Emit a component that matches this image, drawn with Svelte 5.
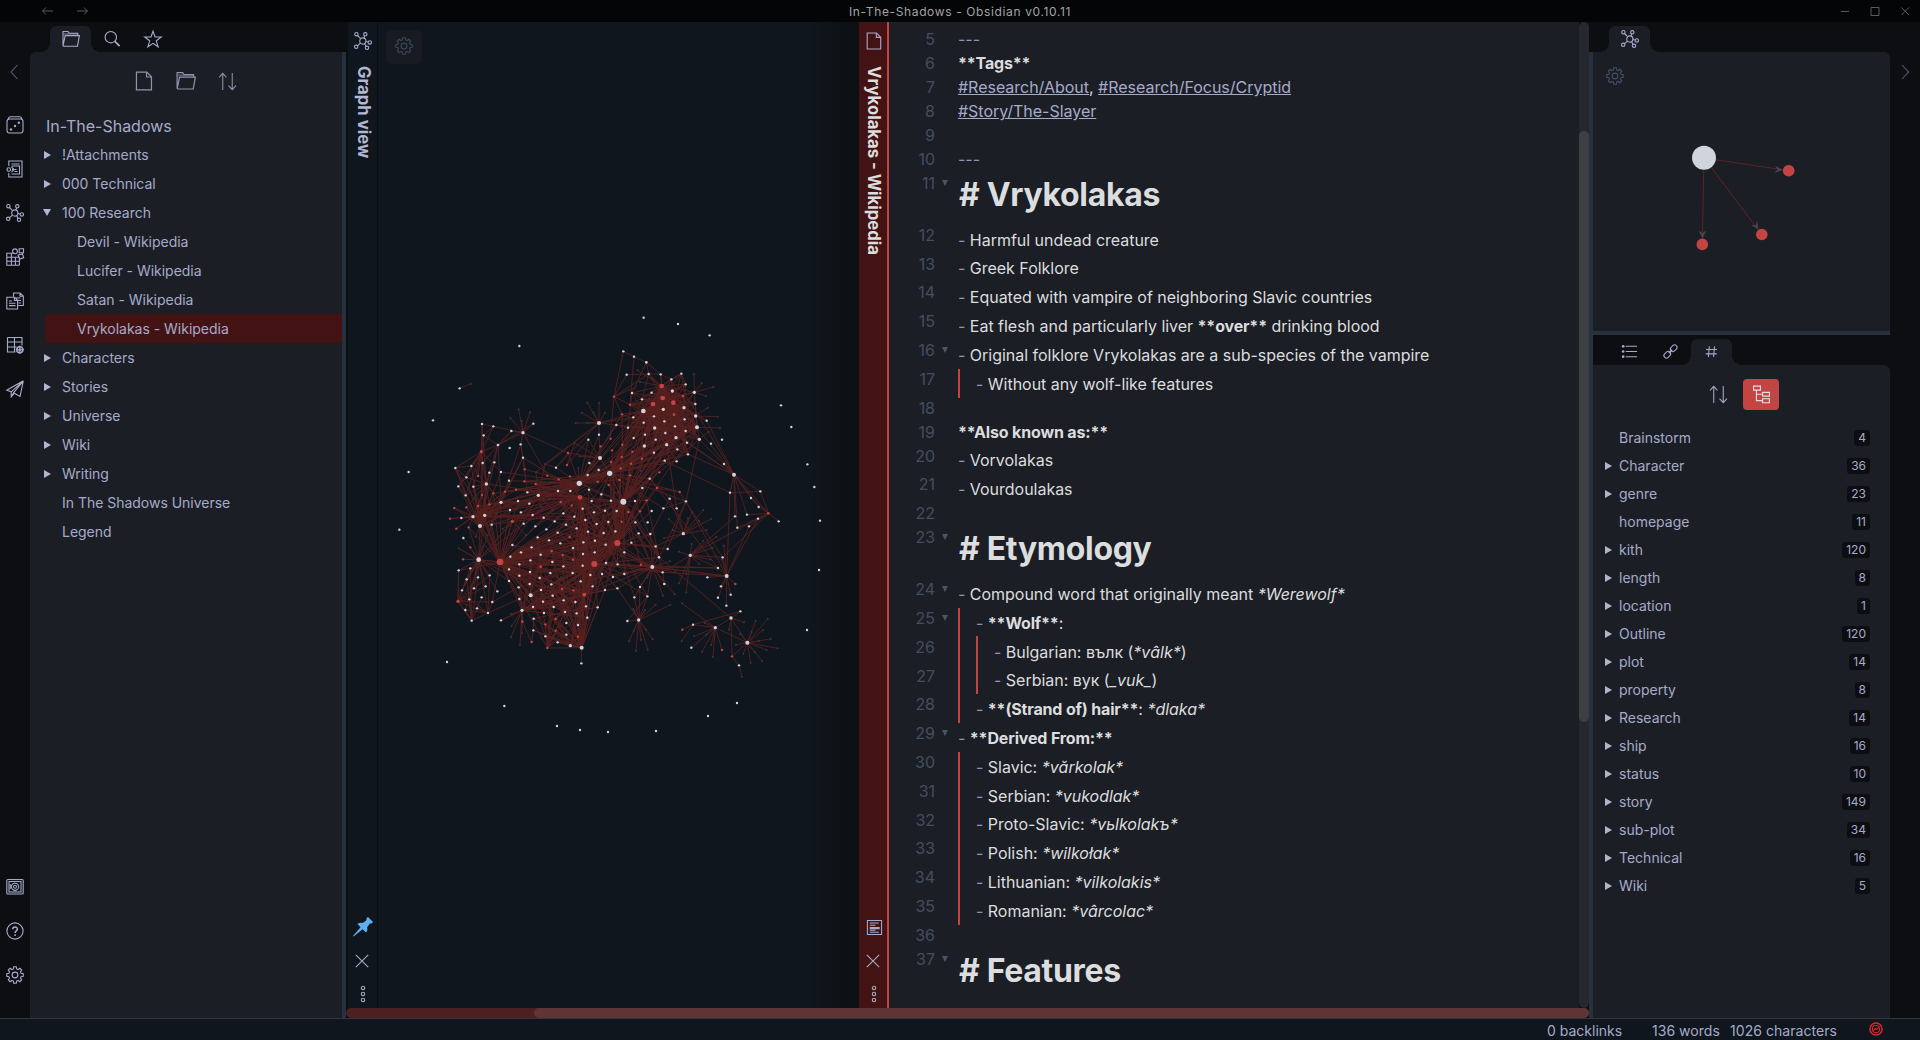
<script>
  // ---------- file explorer ----------
  const files = [
    { name: '!Attachments', kind: 'closed' },
    { name: '000 Technical', kind: 'closed' },
    { name: '100 Research', kind: 'open' },
    { name: 'Devil - Wikipedia', kind: 'child' },
    { name: 'Lucifer - Wikipedia', kind: 'child' },
    { name: 'Satan - Wikipedia', kind: 'child' },
    { name: 'Vrykolakas - Wikipedia', kind: 'child', active: true },
    { name: 'Characters', kind: 'closed' },
    { name: 'Stories', kind: 'closed' },
    { name: 'Universe', kind: 'closed' },
    { name: 'Wiki', kind: 'closed' },
    { name: 'Writing', kind: 'closed' },
    { name: 'In The Shadows Universe', kind: 'file' },
    { name: 'Legend', kind: 'file' }
  ];

  const tags = [
    ['Brainstorm', 4, 0], ['Character', 36, 1], ['genre', 23, 1], ['homepage', 11, 0],
    ['kith', 120, 1], ['length', 8, 1], ['location', 1, 1], ['Outline', 120, 1],
    ['plot', 14, 1], ['property', 8, 1], ['Research', 14, 1], ['ship', 16, 1],
    ['status', 10, 1], ['story', 149, 1], ['sub-plot', 34, 1], ['Technical', 16, 1], ['Wiki', 5, 1]
  ];

  // ---------- editor: t = plain, b = bold, i = italic, m = list/rule mark, a = tag ----------
  const lines = [
    { n: 5, s: [['m', '---']] },
    { n: 6, s: [['b', '**Tags**']] },
    { n: 7, s: [['a', '#Research/About'], ['t', ', '], ['a', '#Research/Focus/Cryptid']] },
    { n: 8, s: [['a', '#Story/The-Slayer']] },
    { n: 9, s: [] },
    { n: 10, s: [['m', '---']] },
    { n: 11, k: 'head', fold: 1, s: [['b', '# Vrykolakas']] },
    { n: 12, k: 'list', s: [['t', 'Harmful undead creature']] },
    { n: 13, k: 'list', s: [['t', 'Greek Folklore']] },
    { n: 14, k: 'list', s: [['t', 'Equated with vampire of neighboring Slavic countries']] },
    { n: 15, k: 'list', s: [['t', 'Eat flesh and particularly liver '], ['b', '**over**'], ['t', ' drinking blood']] },
    { n: 16, k: 'list', fold: 1, s: [['t', 'Original folklore Vrykolakas are a sub-species of the vampire']] },
    { n: 17, k: 'list', d: 1, s: [['t', 'Without any wolf-like features']] },
    { n: 18, s: [] },
    { n: 19, s: [['b', '**Also known as:**']] },
    { n: 20, k: 'list', s: [['t', 'Vorvolakas']] },
    { n: 21, k: 'list', s: [['t', 'Vourdoulakas']] },
    { n: 22, s: [] },
    { n: 23, k: 'head', fold: 1, s: [['b', '# Etymology']] },
    { n: 24, k: 'list', fold: 1, s: [['t', 'Compound word that originally meant '], ['i', '*Werewolf*']] },
    { n: 25, k: 'list', d: 1, fold: 1, s: [['b', '**Wolf**'], ['t', ':']] },
    { n: 26, k: 'list', d: 2, s: [['t', 'Bulgarian: вълк ('], ['i', '*vâlk*'], ['t', ')']] },
    { n: 27, k: 'list', d: 2, s: [['t', 'Serbian: вук ('], ['i', '_vuk_'], ['t', ')']] },
    { n: 28, k: 'list', d: 1, s: [['b', '**(Strand of) hair**'], ['t', ': '], ['i', '*dlaka*']] },
    { n: 29, k: 'list', fold: 1, s: [['b', '**Derived From:**']] },
    { n: 30, k: 'list', d: 1, s: [['t', 'Slavic: '], ['i', '*vărkolak*']] },
    { n: 31, k: 'list', d: 1, s: [['t', 'Serbian: '], ['i', '*vukodlak*']] },
    { n: 32, k: 'list', d: 1, s: [['t', 'Proto-Slavic: '], ['i', '*vьlkolakъ*']] },
    { n: 33, k: 'list', d: 1, s: [['t', 'Polish: '], ['i', '*wilkołak*']] },
    { n: 34, k: 'list', d: 1, s: [['t', 'Lithuanian: '], ['i', '*vilkolakis*']] },
    { n: 35, k: 'list', d: 1, s: [['t', 'Romanian: '], ['i', '*vârcolac*']] },
    { n: 36, s: [] },
    { n: 37, k: 'head', fold: 1, s: [['b', '# Features']] }
  ];

  // ---------- graph view: "x,y" or "x,y,r", in thirds of a pixel ----------
  const parse = (str, dx, c) =>
    str.trim().split(/\s+/).map((p) => {
      const [x, y, r] = p.split(',').map(Number);
      return { x: x + dx, y, c, r: r || (c === 'g' ? 3 : 3.6) };
    });

  const white = [
    ...parse(`276,372 310,379 281,406 324,435,4 359,444 364,393 430,371 392,433 399,473 399,398,5 278,489 313,487 298,518 333,516 196,504 244,498
      229,532 205,559 250,560 227,586 289,552,5 357,542 412,577 445,586,5 384,603 418,611 333,607,5 360,630 393,637 428,645
      461,653 284,646,5 249,650,5 270,678,6 305,674 214,654 220,714 206,811 241,805 264,832 230,838 216,871 252,865 287,859
      299,826 322,874 238,898 275,892 307,906 261,925 226,930 245,962 294,939 266,779,7 401,671 436,679 469,688 503,698
      528,674 494,664 520,640 553,650 578,626 586,660 560,685 594,695 620,672 612,637 645,632 655,666 641,699 676,694
      680,633 663,602 605,603 634,583 597,569 541,573 504,573 498,503 593,525 598,489 626,510 630,474,6 627,404 595,419
      679,375 714,383 367,735 425,742 443,712 477,721 511,730 393,757 361,770 421,781 388,793 357,808 452,764 487,786
      520,799 481,819 449,834 420,816 388,827 357,843 386,862 419,852 453,870 484,853 488,887 422,886,6 388,897 429,921
      459,905 396,931,5 431,956 462,939 491,921 521,901 556,906 525,936 529,969 560,940 588,919 592,953 564,975
      529,1004 503,1027 541,1037,5 575,1043,6 574,1090 466,1009 430,991 333,961 548,819 572,844 608,859 601,825 636,822
      648,789 669,831 683,793 703,822 703,757 647,734 615,722 580,727 549,744 579,762 614,757 578,797 645,870 682,865
      623,922 712,963 700,154 710,224 627,369,6 568,550,8 659,520,8 700,605,9`, 0, 'w'),
    ...parse(`102,170 139,187,4 146,222 182,223 244,221 214,238 257,253 217,273,5 283,277,5 155,278 96,279 126,298 286,312
      252,323,5 190,328,5 130,333,7 162,349 100,352 287,348,5 254,358 193,364 131,368 320,362 291,382,6 225,379 164,384,5
      257,393 196,399 135,404 228,413,5 298,418,5 366,419 167,419 101,414 333,431 261,428 200,434,5 133,438,5 162,458
      232,448 264,463 194,482 230,484 372,492 402,524,6 390,578 481,574 453,594 476,621 441,644 405,649 474,656 536,664
      412,683 447,679 149,536 127,564 105,603 209,596 258,604 190,625 230,625 155,633 106,667 143,667 116,700 151,702,4
      250,701,5 167,739 203,747 94,728 177,772,4 157,801,6 188,817 120,861 103,892 142,889 193,852,4 271,766,5 368,772
      354,804 322,832 380,828,6 363,859 392,884 354,893 379,917 116,960,5 421,934 393,954,5 279,974 346,983,5
      442,1028,6 274,1043 417,1096`, 630, 'w')
  ];
  const red = [
    ...parse(`274,455,5 264,528 276,585 310,580 345,575 378,569 264,618 298,613 229,622 193,624 180,656 199,686 236,682
      241,742 219,778 404,508 403,544 437,552 472,527 506,538 540,529 534,459 531,495 512,606 545,616 367,664,5 539,711
      485,753 518,765 549,779 452,800,4 516,867 550,871 397,965,4 466,973 497,957 497,992 564,1010 472,1044 425,1026
      662,416 632,439 666,451 697,434 695,471 663,486 692,505 623,545 656,555 688,540 695,665 696,343 672,290 715,636
      204,904,5 570,592,7 583,884,6 330,786,10 613,792,9 682,729,9`, 0, 'r'),
    ...parse(`185,258,7 188,294,7 159,312,7 220,308,7 249,288,4 222,344,4 90,314 97,455 93,491 126,476 90,526 178,517 171,564
      239,576 140,601 120,634 505,640,4 406,852 123,794 247,989 366,1050 396,1069`, 630, 'r')
  ];
  const grey = [
    ...parse(`386,328 420,337 361,354 395,363 592,308 627,308 575,338 610,338 645,338 557,369 592,369 554,429 568,469
      565,504 465,492 438,517 479,596 453,621 487,630 320,641 338,687 408,706 257,710 291,706 206,745 278,739 513,832
      363,942 365,978 363,1012 390,1035 396,1000 684,577`, 0, 'g'),
    ...parse(`282,223 305,250 340,261 318,288 323,323 353,350 360,384 113,211 120,246 326,395 310,630 334,656 298,663 320,690
      349,711 276,636 264,655 206,657 218,690 192,714 310,722 372,737 337,744 275,732 237,755 331,779 365,778 298,792
      210,784 258,822 224,817 237,850 259,877 224,883 246,910 211,915 189,887 167,914 142,833 135,930 100,927 101,993
      138,989 87,1024 123,1020 158,1017 108,1052 143,1049 314,969 387,989 282,1009 318,1004 334,1035 306,1056 339,1071
      432,967 467,962 503,957 455,996 489,990 420,1001 477,1023 512,1017 533,1045 500,1050 464,1056 430,1061 486,1083
      452,1088 408,1034 122,512`, 630, 'g')
  ];
  const lone = [
    ...parse('388,138 129,361 56,516 28,689 171,1086 209,265 343,1218 501,1278 570,1290 654,1296 798,1293 954,1248 1041,1209', 0, 'w'),
    ...parse('131,53 234,72 329,106 543,316 574,381 622,493 643,561 660,662 657,810 621,990', 630, 'w'),
    ...parse('242,252 875,1024 1056,1130', 0, 'g')
  ];

  let seed = 7;
  const rnd = () => ((seed = (seed * 16807) % 2147483647) / 2147483647);
  const linked = [...white, ...red];
  const edges = [];
  const link = (x1, y1, x2, y2) => edges.push(`M${x1} ${y1}L${x2} ${y2}`);
  const fan = (hx, hy, x0, y0, x1, y1, p) => {
    for (const n of linked)
      if (n.x >= x0 && n.x <= x1 && n.y >= y0 && n.y <= y1 && rnd() < p * 1.7) link(hx, hy, n.x, n.y);
  };
  const path = (str) => {
    const pts = str.split(' ').map((p) => p.split(','));
    for (let i = 1; i < pts.length; i++) link(pts[i - 1][0], pts[i - 1][1], pts[i][0], pts[i][1]);
  };

  // unresolved notes hang off the closest hub
  const hubs = linked.filter((n) => n.r >= 5);
  for (const g of grey) {
    let best = hubs[0];
    for (const h of hubs) if (Math.hypot(h.x - g.x, h.y - g.y) < Math.hypot(best.x - g.x, best.y - g.y)) best = h;
    link(g.x, g.y, best.x, best.y);
  }
  // central mass
  fan(330, 786, 345, 690, 600, 940, 0.5);
  fan(330, 786, 225, 560, 480, 700, 0.4);
  fan(330, 786, 480, 560, 720, 740, 0.35);
  fan(613, 792, 345, 690, 720, 960, 0.42);
  fan(613, 792, 480, 560, 700, 760, 0.35);
  fan(682, 729, 460, 560, 860, 900, 0.35);
  fan(583, 884, 400, 740, 690, 1045, 0.35);
  fan(575, 1043, 430, 850, 640, 1045, 0.5);
  fan(541, 1037, 430, 900, 600, 1045, 0.35);
  fan(472, 1044, 450, 850, 600, 1000, 0.25);
  fan(422, 886, 345, 740, 560, 960, 0.25);
  fan(396, 931, 330, 780, 620, 965, 0.25);
  fan(452, 800, 345, 690, 620, 920, 0.25);
  fan(525, 936, 400, 740, 640, 1045, 0.2);
  fan(575, 1043, 480, 650, 640, 850, 0.25);
  fan(266, 779, 190, 600, 420, 900, 0.25);
  fan(266, 779, 200, 790, 330, 960, 0.3);
  fan(204, 904, 200, 800, 330, 965, 0.5);
  fan(245, 962, 200, 800, 320, 965, 0.3);
  fan(294, 939, 215, 800, 330, 965, 0.3);
  // north-west
  fan(274, 455, 190, 370, 345, 600, 0.4);
  fan(289, 552, 225, 480, 345, 700, 0.35);
  fan(270, 678, 180, 480, 345, 700, 0.35);
  fan(249, 650, 180, 540, 345, 720, 0.3);
  fan(333, 607, 240, 430, 460, 700, 0.2);
  fan(324, 435, 270, 370, 440, 520, 0.25);
  fan(399, 473, 330, 380, 420, 610, 0.2);
  // arc between the west hubs and the middle
  fan(568, 550, 280, 500, 560, 680, 0.42);
  fan(570, 592, 280, 540, 560, 720, 0.45);
  fan(659, 520, 330, 540, 560, 680, 0.25);
  fan(249, 650, 330, 540, 600, 660, 0.25);
  fan(270, 678, 330, 540, 600, 660, 0.2);
  fan(570, 592, 540, 600, 720, 860, 0.38);
  fan(568, 550, 590, 340, 860, 480, 0.3);
  fan(659, 520, 590, 380, 900, 640, 0.28);
  fan(659, 520, 700, 240, 930, 450, 0.3);
  fan(700, 605, 560, 480, 800, 830, 0.4);
  fan(700, 605, 690, 300, 930, 560, 0.28);
  fan(682, 729, 640, 420, 760, 680, 0.4);
  fan(682, 729, 740, 240, 900, 440, 0.12);
  fan(583, 884, 560, 560, 720, 760, 0.28);
  // north-east knot
  fan(815, 258, 720, 215, 930, 440, 0.55);
  fan(819, 294, 720, 215, 930, 440, 0.55);
  fan(789, 312, 700, 240, 930, 480, 0.55);
  fan(850, 308, 740, 215, 950, 480, 0.55);
  fan(760, 333, 640, 270, 900, 500, 0.4);
  fan(794, 384, 660, 300, 940, 500, 0.38);
  fan(921, 382, 740, 250, 930, 500, 0.38);
  fan(852, 344, 700, 250, 930, 480, 0.38);
  fan(882, 323, 780, 230, 960, 430, 0.38);
  // south-east
  fan(787, 801, 570, 680, 840, 900, 0.35);
  fan(807, 772, 690, 560, 900, 830, 0.18);
  fan(818, 817, 650, 700, 840, 870, 0.18);
  fan(613, 792, 700, 700, 830, 900, 0.33);
  fan(901, 766, 760, 690, 840, 820, 0.22);
  for (const p of ['1020,578', '1111,574', '1083,594', '1106,621', '1071,644', '1035,649', '1136,640', '1042,683', '921,382',
    '928,418', '883,277', '1002,492', '760,333', '830,434', '891,428', '950,362']) path('1032,524 ' + p);
  for (const p of ['1106,621', '1071,644', '1104,656', '1042,683', '1077,679', '1166,664', '1111,574', '1083,594', '998,772'])
    path('1136,640 ' + p);
  for (const p of ['1020,578', '1104,656', '1077,679', '993,859', '1022,884', '984,893', '1009,917', '1036,852', '984,804',
    '952,832', '998,772', '818,817', '787,801', '888,604']) path('1010,828 ' + p);
  [
    '823,482 1020,578', '1020,578 1111,574', '780,536 984,804', '868,576 998,772', '901,766 1104,656', '901,766 1035,649',
    '901,766 998,772', '901,766 984,804', '613,792 984,804', '787,801 984,804', '807,772 1023,954', '779,536 839,596 881,701',
    '928,418 888,604 820,625', '830,434 860,625 881,701', '700,605 779,536 808,517', '781,702 839,596',
    '801,564 868,576', '833,747 888,604', '881,701 797,739 787,801', '747,960 682,865 583,884',
    '747,960 733,892 787,801', '747,960 772,889', '747,960 712,963', '747,960 730,927', '747,960 765,930', '747,960 750,861',
    '823,852 787,801', '823,852 818,817', '712,963 772,889', '613,792 682,865 787,801',
    '909,974 1051,934 1023,954', '909,974 976,983 1072,1028 1023,954', '877,989 909,974 875,1024', '1023,954 1026,1069 1072,1028',
    '1026,1069 1047,1096 1056,1130', '976,983 904,1043', '976,983 996,1050', '976,983 1023,954',
    '672,290 700,154 732,170 769,187 776,222', '672,290 776,222 812,223', '672,290 710,224 776,222', '769,187 812,223 844,238',
    '732,170 720,314', '769,187 726,279 714,383', '776,222 756,298', '672,290 660,420', '672,290 740,260', '696,343 672,290',
    '874,221 844,238 815,258', '874,221 887,253 847,273', '813,223 815,258 874,221 883,277',
    '627,369 465,492', '627,369 438,517', '627,369 679,375 714,383', '627,369 627,404 630,474', '627,369 760,333', '627,369 730,352',
    '627,369 498,503', '399,398 276,372', '399,398 430,371', '399,398 364,393 324,435', '399,398 534,459', '399,398 472,527',
    '399,398 392,433 399,473 506,538', '534,459 568,550', '534,459 498,503 465,492', '534,459 630,474', '554,429 531,495 595,419',
    '276,372 289,552', '310,379 281,406 324,435', '196,504 244,498 274,455', '196,504 229,532', '196,504 227,586 205,559 229,532',
    '196,504 284,646', '245,962 204,904 206,811 241,805 330,786', '333,961 396,931', '294,939 388,897', '307,906 386,862',
    '396,931 397,965 425,1026', '431,956 430,991 425,1026', '422,886 466,1009', '503,1027 575,1043 574,1090',
    '575,1043 623,922 645,870 613,792', '575,1043 608,859', '583,884 645,870', '193,624 249,650 180,656', '199,686 249,650 214,654',
    '219,778 266,779 206,745', '220,714 266,779 241,742', '209,265 242,252', '680,540 568,550 630,474 659,520',
    '330,786 575,1043', '330,786 472,1044', '330,786 503,1027', '330,786 529,1004', '330,786 396,931', '330,786 307,906',
    '1010,828 787,801'
  ].forEach(path);
  const edgePath = edges.join('');
  const nodes = [...grey, ...white, ...red, ...lone];

  // eight-tooth cog outline around (9,9)
  const cog = (() => {
    const pts = [];
    for (let i = 0; i < 8; i++)
      for (const [off, r] of [[-15, 6.3], [-9, 8.3], [9, 8.3], [15, 6.3]]) {
        const a = ((i * 45 + off) * Math.PI) / 180;
        pts.push(`${(9 + r * Math.sin(a)).toFixed(2)} ${(9 - r * Math.cos(a)).toFixed(2)}`);
      }
    return 'M' + pts.join('L') + 'Z';
  })();
</script>

{#snippet icon(name, size = 18)}
  <svg class="ic" width={size} height={size} viewBox="0 0 18 18">
    {#if name === 'graph'}
      <circle cx="8.8" cy="9" r="3.1" />
      <circle cx="2.4" cy="2.2" r="1.7" /><circle cx="11.3" cy="2.3" r="1.7" /><circle cx="15.8" cy="10.4" r="1.7" />
      <circle cx="13" cy="15.8" r="1.7" /><circle cx="2.2" cy="14.8" r="1.7" />
      <path d="M3.5 3.5 6.6 6.7M10.6 3.8 9.9 6.1M11.9 9.5 14.1 10M10.5 11.6l1.5 2.7M6.5 11.1l-2.9 2.6" />
    {:else if name === 'folder'}
      <path d="M1 16V1.5h5l1.2 1.8h8.6v2M1 16.2h14.500L17.4 5.600H3.200L1 16" /><path class="soft" d="M1.600 3.900h14.200" />
    {:else if name === 'search'}
      <circle cx="7.8" cy="7.2" r="5.7" /><path d="m11.9 11.3 4.7 4.8" stroke-width="1.8" />
    {:else if name === 'star'}
      <path d="m9 1.2 2 5.7 6.3.1-5 3.8 1.8 6-5.1-3.5-5.1 3.500 1.800-6L.7 7l6.300-.1z" />
    {:else if name === 'doc'}
      <path d="M2.200 1h9.300l4.200 4.200V17H2.200zM11.300 1v4.400h4.300" />
    {:else if name === 'sort'}
      <path d="M4.500 17V1.500M1 5l3.500-3.700L8 5M13.500 1v15.500M10 13l3.500 3.700L17 13" stroke-width="1" />
    {:else if name === 'dice'}
      <rect x="1" y="3" width="16" height="14" rx="2.500" /><path d="M2 3.500C2.500 1.500 3 .8 4.500.8h9c1.500 0 2 .7 2.500 2.700" />
      <g class="fill"><circle cx="5" cy="13.500" r="1.2" /><circle cx="9" cy="10" r="1.2" /><circle cx="12.800" cy="6.800" r="1.2" /></g>
    {:else if name === 'switcher'}
      <path d="M2.800 6V1h13.200v16H2.800v-4M5.500 4h8M5.500 6h8v8h-8M8.500 11.500h3M6 9.500h4.500M5.500 7l2.700 2.500-2.700 2.500" />
      <circle cx="2.800" cy="9.500" r="1.800" />
    {:else if name === 'blocks'}
      <path d="M.8 5.200h4.600v12H.8zM.8 9.200h12.600v8M.8 13.200h12.600M5.400 17.200h8M9.400 9.200v8M5.400 5.200h3M13.200.8h4.300v4h-4.300zM12 7l4.500-1 1.200 3.600-4 1.600z" />
      <circle cx="9" cy="3.300" r="2.400" />
    {:else if name === 'copies'}
      <path d="M7.500 4.500V1h6.500l3.300 3V13.500h-5M14 1v3.300h3M.8 5.200h7.800l3 3V17H.8zM8.400 5.200v3.200h3M3 9h3M3 11.300h6.500M3 13.600h6.500M9.500 6h5M11.500 8.500h3.500M12.500 11h2.500" />
    {:else if name === 'table'}
      <path d="M1.500 1.500h14.500v8M1.500 1.500v14.500h8M1.500 6h14.500M1.500 11h9M8.500 1.500v14.500" />
      <circle cx="13.800" cy="13.800" r="3" stroke-width="1.600" /><circle cx="13.800" cy="13.800" r=".8" />
      <path d="M13.800 9.600v8.400M9.600 13.800H18" />
    {:else if name === 'send'}
      <path d="M17.300.8.8 10.200l4.400 1.600L17.300.8 7.500 12.800l6.500 3.700L17.300.8M5.200 11.800v5l3-3.500M7.500 12.800l-2.300 4" />
    {:else if name === 'vault'}
      <rect x=".8" y="1.500" width="16.400" height="14.500" rx="1" /><rect x="3" y="3.500" width="12" height="10.500" />
      <circle cx="9" cy="8.800" r="3.600" /><circle cx="9" cy="8.800" r="1.500" /><path d="M4.200 6v5" />
    {:else if name === 'help'}
      <circle cx="9" cy="9" r="8.100" /><path d="M6.700 7.300c0-3.200 4.700-3.100 4.700-.2 0 1.700-2.300 1.900-2.300 3.800M9.100 12.300v1.600" stroke-width="1.500" />
    {:else if name === 'cog'}
      <path d={cog} /><circle cx="9" cy="9" r="2.900" />
    {:else if name === 'left'}
      <path d="M11.500 2 5 9l6.500 7" />
    {:else if name === 'right'}
      <path d="m6 2 6.500 7L6 16" />
    {:else if name === 'cross'}
      <path d="m2.800 2.800 12.400 12.400M15.200 2.800 2.800 15.200" />
    {:else if name === 'dots'}
      <circle cx="9" cy="3" r="1.700" /><circle cx="9" cy="9" r="1.700" /><circle cx="9" cy="15" r="1.700" />
    {:else if name === 'pin'}
      <path class="fill" d="M13.500 0 18 4.500c-.6 1.200-1.800 1.500-2.800 1.300l-2.500 3.400c.6 1.900.2 3.600-1 4.800L8.600 11 .6 17.600 0 17l6.800-7.700L4 6.400c1.300-1.200 3-1.500 4.700-.9l3.400-2.600C11.900 1.800 12.300.6 13.500 0z" />
    {:else if name === 'preview'}
      <path d="M1.500 1.500h15v15h-15zM4 4.300h9.500M4 6.600h6M4 8.900h10.500M4 10.200h10.500M4 12h6M4 14h9.500" />
    {:else if name === 'list'}
      <path d="M5 3.500h12M5 9h12M5 14.500h12" /><g class="fill"><circle cx="2.300" cy="3.500" r="1.400" /><circle cx="2.300" cy="9" r="1.400" /><circle cx="2.300" cy="14.500" r="1.400" /></g>
    {:else if name === 'link'}
      <rect x="-3.900" y="-2.600" width="7.800" height="5.200" rx="2.600" transform="translate(12.400 5.600) rotate(-45)" />
      <rect x="-3.900" y="-2.600" width="7.800" height="5.200" rx="2.600" transform="translate(5.600 12.400) rotate(-45)" />
      <path d="m7.200 10.800 3.600-3.600" stroke-width="1.600" />
    {:else if name === 'hash'}
      <path d="M6.700 3.500 5.700 15M12.200 3.500l-1 11.500M3.200 6.800h11.600M2.900 11.500h11.600" />
    {:else if name === 'tree'}
      <path d="M1.500 1h6.500v3.800H1.500zM10 7h6.500v3.500H10zM10 13h6.500v3.800H10zM4.200 4.800v10h5.800M4.200 8.800H10" />
    {:else if name === 'target'}
      <circle cx="9" cy="9" r="7.800" stroke-width="1.900" /><circle cx="9" cy="9" r="4.600" stroke-width="1.300" /><path d="M5.500 11l2.700-2.600 1.600 1.400L12.500 7" stroke-width="1.300" />
    {/if}
  </svg>
{/snippet}

<div class="app">
  <header class="titlebar">
    <svg class="hist" width="50" height="12" viewBox="0 0 50 12"><path d="M13 6H2.500M6 2.500 2.500 6 6 9.500M37 6h10.500M44 2.500 47.500 6 44 9.500" /></svg>
    <span class="title">In-The-Shadows - Obsidian v0.10.11</span>
    <svg class="win" width="72" height="12" viewBox="0 0 72 12"><path d="M1 6.500h8M31 2.500h8v8h-8zM61.500 2.500l7.500 7.500M69 2.500 61.500 10" /></svg>
  </header>

  <div class="body">
    <nav class="ribbon left">
      <span class="chev">{@render icon('left', 18)}</span>
      {#each ['dice', 'switcher', 'graph', 'blocks', 'copies', 'table', 'send'] as n}
        <span class="rb">{@render icon(n)}</span>
      {/each}
      <span class="grow"></span>
      {#each ['vault', 'help', 'cog'] as n}
        <span class="rb">{@render icon(n)}</span>
      {/each}
    </nav>

    <aside class="explorer">
      <div class="tabs first">
        <span class="tab on">{@render icon('folder')}</span>
        <span class="tab">{@render icon('search')}</span>
        <span class="tab">{@render icon('star')}</span>
      </div>
      <div class="panel tl">
        <div class="actions">
          {@render icon('doc', 20)}{@render icon('folder', 20)}{@render icon('sort', 19)}
        </div>
        <div class="vault">In-The-Shadows</div>
        {#each files as f}
          <div class="row {f.kind}" class:active={f.active}>
            <span class="arrow {f.kind}"></span><span>{f.name}</span>
          </div>
        {/each}
      </div>
    </aside>
    <div class="resizer"></div>

    <main>
      <div class="panes">
        <div class="strip">
          {@render icon('graph')}
          <span class="vtitle">Graph view</span>
          <span class="grow"></span>
          <span class="pin">{@render icon('pin', 20)}</span>
          <span class="sx">{@render icon('cross', 18)}</span>
          <span>{@render icon('dots', 18)}</span>
        </div>
        <section class="graph">
          <svg class="net" width="481" height="986" viewBox="0 0 1443 2958">
            <g transform="translate(36 834)">
              <path class="edges" d={edgePath} />
              {#each nodes as n}<circle class={n.c} cx={n.x} cy={n.y} r={n.r} />{/each}
            </g>
          </svg>
          <span class="gbtn">{@render icon('cog')}</span>
        </section>
        <div class="strip note">
          {@render icon('doc')}
          <span class="vtitle">Vrykolakas - Wikipedia</span>
          <span class="grow"></span>
          <span class="pin">{@render icon('preview', 17)}</span>
          <span class="sx">{@render icon('cross', 18)}</span>
          <span>{@render icon('dots', 18)}</span>
        </div>
        <section class="editor">
          {#each lines as l}
            <div class="line {l.k || ''}">
              <span class="num">{l.n}</span>
              <span class="fold">{#if l.fold}<i></i>{/if}</span>
              {#each { length: l.d || 0 } as _}<span class="guide"></span>{/each}
              <span class="txt">{#if l.k === 'list'}<span class="m">-&nbsp;</span>{/if}{#each l.s as [c, t]}<span class={c}>{t}</span>{/each}</span>
            </div>
          {/each}
        </section>
        <div class="vscroll"><div class="thumb"></div></div>
      </div>
      <div class="hscroll"><div class="thumb"></div></div>
    </main>
    <div class="resizer r"></div>

    <aside class="side">
      <div class="tabs">
        <span class="tab on">{@render icon('graph')}</span>
      </div>
      <div class="panel tr local">
        <span class="lcog">{@render icon('cog')}</span>
        <svg class="lnet" width="297" height="279" viewBox="0 0 297 279">
          <path class="ledge" d="M111 106 195.700 118.700M111 106 168.800 182.500M111 106 109.300 192.400" />
          <path class="tip" d="M190 118l-8-4.500 2.500 4-3.200 3.500zM165.500 177.500l-7.500-4.500 5 .2 1.200-5.200zM109.500 186.500l-4-8 4 2.500 4-2.500z" />
          <circle class="w" cx="111" cy="105.800" r="12" />
          <circle class="r" cx="195.700" cy="118.700" r="5.800" />
          <circle class="r" cx="168.800" cy="182.500" r="5.800" />
          <circle class="r" cx="109.300" cy="192.400" r="5.800" />
        </svg>
      </div>
      <div class="hres"></div>
      <div class="tabs">
        <span class="tab">{@render icon('list', 17)}</span>
        <span class="tab">{@render icon('link', 17)}</span>
        <span class="tab on">{@render icon('hash', 17)}</span>
      </div>
      <div class="panel tr grow">
        <div class="tagbar">
          <span class="tsort">{@render icon('sort', 19)}</span>
          <span class="tbtn">{@render icon('tree', 19)}</span>
        </div>
        {#each tags as [name, count, kids]}
          <div class="tag">
            <span class="arrow {kids ? 'closed' : ''}"></span><span class="tn">{name}</span><span class="count">{count}</span>
          </div>
        {/each}
      </div>
    </aside>

    <nav class="ribbon right"><span class="chev">{@render icon('right', 18)}</span></nav>
  </div>

  <footer class="status">
    <span class="s1">0 backlinks</span><span class="s2">136 words</span><span class="s3">1026 characters</span>
    <span class="s4">{@render icon('target', 14)}</span>
  </footer>
</div>

<style>
  :global(body) { background: #0d0e12; overflow: hidden; }
  .app {
    width: 1920px; height: 1040px; display: flex; flex-direction: column;
    font-family: Inter, 'Liberation Sans', sans-serif; font-size: 14px; color: #a6abca; background: #0d0e12;
  }
  .ic { display: block; flex: none; fill: none; stroke: currentColor; stroke-width: 1.1; overflow: visible; }
  .ic .fill { fill: currentColor; stroke: none; }
  .ic .soft { stroke-width: 1.6; opacity: 0.5; }
  .grow { flex: 1; }

  .titlebar { height: 22px; flex: none; background: #040506; display: flex; align-items: center; justify-content: space-between; color: #a2a3a5; }
  .titlebar svg { fill: none; stroke: #5a5b5e; stroke-width: 1; }
  .hist { margin-left: 40px; }
  .win { margin-right: 8px; }
  .title { font-size: 12px; letter-spacing: 0.63px; line-height: 22px; margin-right: 10px; padding-top: 1px; }

  .body { flex: 1; display: flex; min-height: 0; }
  .ribbon { width: 30px; flex: none; background: #0d0e12; display: flex; flex-direction: column; align-items: center; padding-bottom: 21px; }
  .chev { height: 18px; margin-top: 41px; margin-bottom: 22px; color: #55617a; }
  .ribbon.right .chev { margin-left: -1px; }
  .rb { height: 44px; display: flex; align-items: center; }

  .explorer { width: 312px; flex: none; display: flex; flex-direction: column; }
  .tabs { height: 30px; flex: none; display: flex; align-items: flex-end; background: #0d0e12; padding-left: 16px; }
  .tabs.first { padding-left: 20px; }
  .tab { position: relative; width: 41px; height: 26px; display: flex; align-items: center; justify-content: center; box-sizing: border-box; padding-bottom: 1px; }
  .tab.on { background: #1b1e25; border-radius: 6px 6px 0 0; }
  .tab.on::before, .tab.on::after { content: ''; position: absolute; bottom: 0; width: 9px; height: 9px; }
  .tab.on::before { left: -9px; background: radial-gradient(circle at 0 0, transparent 8.500px, #1b1e25 9px); }
  .tab.on::after { right: -9px; background: radial-gradient(circle at 100% 0, transparent 8.500px, #1b1e25 9px); }
  .panel { background: #1b1e25; }
  .tl { flex: 1; border-top-left-radius: 6px; }
  .tr { border-top-right-radius: 6px; }
  .actions { display: flex; gap: 22px; padding: 19px 0 0 104px; height: 39px; align-items: center; box-sizing: border-box; color: #8e93ac; }
  .vault { font-size: 16px; line-height: 24px; padding: 23px 0 0 16px; height: 49.300px; box-sizing: border-box; }
  .row { height: 29px; margin-left: 15px; display: flex; align-items: center; border-radius: 4px 0 0 4px; letter-spacing: -0.02px; }
  .row.child { padding-left: 15px; }
  .row.active { background: #431314; }
  .arrow { width: 17px; flex: none; }
  .arrow.closed::before, .arrow.open::before { content: ''; display: block; width: 0; height: 0; border: 4px solid transparent; }
  .arrow.closed::before { border-width: 4.500px 0 4.500px 7px; border-left-color: #b0b5d0; margin-left: -1px; }
  .arrow.open::before { border-top: 7px solid #b0b5d0; border-bottom: 0; margin-left: -2px; }
  .resizer { width: 4px; flex: none; background: #26303f; margin-top: 30px; }

  main { width: 1243px; flex: none; display: flex; flex-direction: column; background: #0b0e12; }
  .panes { flex: 1; display: flex; min-height: 0; }
  .strip { width: 30px; flex: none; box-sizing: border-box; margin-left: 2px; background: #0f161d; border-right: 1px solid #0a0f14; display: flex; flex-direction: column; align-items: center; padding: 10px 0 5px; }
  .vtitle { writing-mode: vertical-rl; font-size: 16.700px; font-weight: 700; line-height: 24px; margin: 16px 0 0 2px; color: #b3b7d4; }
  .pin { color: #62aeef; margin-bottom: 15px; }
  .strip .sx { margin: 0 2px 15px 0; }
  .strip.note { margin-left: 0; padding-left: 2px; background: #431314; border-right: 2px solid #c44444; }
  .note .vtitle { color: #dcddde; margin-left: 0; }
  .note .pin { color: inherit; margin-bottom: 16px; }
  .graph { width: 481px; flex: none; position: relative; background: linear-gradient(90deg, #0f161d 430px, #0c1013 476px); }
  .net { display: block; }
  .edges { fill: none; stroke: #56201f; stroke-width: 3; opacity: 0.900; }
  .w { fill: #d0d5dd; }
  .r { fill: #c44444; }
  .g { fill: #2f3a49; }
  .gbtn { position: absolute; left: 8px; top: 8px; width: 36px; height: 34px; border-radius: 6px; background: #181b21; color: #3a475a; display: flex; align-items: center; justify-content: center; box-sizing: border-box; padding-bottom: 2px; }

  .editor { flex: 1; background: #1b1e25; padding-top: 5px; overflow: hidden; font-size: 16px; line-height: 24px; color: #dcddde; letter-spacing: -0.02px; }
  .line { display: flex; height: 24px; white-space: pre; }
  .line.list { height: 28.800px; }
  .line.head { height: 51.900px; }
  .num { width: 46px; flex: none; text-align: right; color: #434e61; }
  .fold { width: 23px; flex: none; }
  .fold i { display: block; margin: 9px 0 0 7px; width: 0; border: 3px solid transparent; border-top: 6px solid #4a5568; border-bottom: 0; }
  .guide { width: 16px; flex: none; height: 29px; border-left: 2px solid #c44444; margin-top: 1.700px; }
  .list .txt { padding-top: 4.800px; }
  .head .txt { font-size: 32px; line-height: 47px; padding-left: 1px; }
  .m { color: #8f95b5; }
  .b { font-weight: 700; letter-spacing: -0.010em; }
  .i { font-style: italic; }
  .a { color: #a6abca; text-decoration: underline; }
  .vscroll { width: 10px; flex: none; background: #26282f; padding-top: 109px; box-sizing: border-box; border-radius: 5px; }
  .vscroll .thumb { height: 591px; background: #3d4043; border-radius: 5px; }
  .hscroll { height: 10px; flex: none; background: #4d1f21; padding-left: 188px; border-radius: 5px; }
  .hscroll .thumb { height: 10px; background: #5e3536; border-radius: 5px; }

  .side { width: 297px; flex: none; display: flex; flex-direction: column; }
  .local { height: 279px; flex: none; position: relative; }
  .lcog { position: absolute; left: 13px; top: 15px; color: #445064; }
  .lnet { display: block; }
  .ledge { fill: none; stroke: #5e2325; stroke-width: 1; }
  .tip { fill: #48454f; }
  .hres { height: 4px; flex: none; background: #26303f; }
  .tagbar { display: flex; align-items: center; padding: 14px 0 0 116px; height: 45px; box-sizing: border-box; margin-bottom: 13.500px; gap: 15px; }
  .tsort { margin-bottom: 1px; }
  .tbtn { width: 36px; height: 31px; border-radius: 4px; background: #c44444; color: #e6dfe3; display: flex; align-items: center; justify-content: center; }
  .tag { height: 28px; display: flex; align-items: center; padding: 0 20px 0 13px; }
  .tag .arrow { width: 13px; }
  .tn { flex: 1; }
  .count { font-size: 12px; line-height: 16px; background: #0d0e12; border-radius: 3px; padding: 0 4px; margin-top: 1px; }

  .status { height: 22px; flex: none; box-sizing: border-box; border-top: 1px solid #33363a; background: #0f161d; display: flex; align-items: center; padding-top: 1px; padding-left: 1547px; }
  .s1 { width: 105px; flex: none; }
  .s2 { width: 78px; flex: none; letter-spacing: 0.03px; }
  .s3 { width: 139px; flex: none; letter-spacing: 0.05px; }
  .s4 { color: #e0262c; margin-top: -2px; }
</style>
